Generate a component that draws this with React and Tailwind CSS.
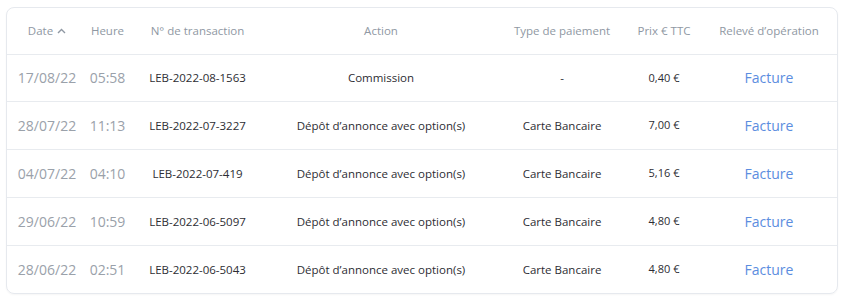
import React from "react";

const rows = [
  ["17/08/22", "05:58", "LEB-2022-08-1563", "Commission", "-", "0,40 €"],
  ["28/07/22", "11:13", "LEB-2022-07-3227", "Dépôt d’annonce avec option(s)", "Carte Bancaire", "7,00 €"],
  ["04/07/22", "04:10", "LEB-2022-07-419", "Dépôt d’annonce avec option(s)", "Carte Bancaire", "5,16 €"],
  ["29/06/22", "10:59", "LEB-2022-06-5097", "Dépôt d’annonce avec option(s)", "Carte Bancaire", "4,80 €"],
  ["28/06/22", "02:51", "LEB-2022-06-5043", "Dépôt d’annonce avec option(s)", "Carte Bancaire", "4,80 €"],
];

export default function App() {
  return (
    <div className="w-[846px] h-[301px] bg-white pt-[7px] pl-[6px]" style={{ fontFamily: '"Open Sans", sans-serif' }}>
      <div className="w-[832px] rounded-lg border border-[#e6e9ee] overflow-hidden shadow-[0_1px_2px_rgba(0,0,0,0.04)]">
        <table className="w-full border-collapse table-fixed">
          <colgroup>
            <col className="w-[80px]" />
            <col className="w-[41px]" />
            <col className="w-[139px]" />
            <col className="w-[228px]" />
            <col className="w-[134px]" />
            <col className="w-[70px]" />
            <col className="w-[140px]" />
          </colgroup>
          <thead>
            <tr className="h-[46px] text-[11.5px] text-[#8f98a3]">
              <th className="font-normal text-center">
                <span className="inline-flex items-center gap-[4px]">
                  Date
                  <svg width="9" height="6" viewBox="0 0 9 6" fill="none" stroke="#8f98a3" strokeWidth="1.4">
                    <path d="M1 5L4.5 1.5L8 5" />
                  </svg>
                </span>
              </th>
              <th className="font-normal text-center">Heure</th>
              <th className="font-normal text-center">N° de transaction</th>
              <th className="font-normal text-center">Action</th>
              <th className="font-normal text-center">Type de paiement</th>
              <th className="font-normal text-center">Prix € TTC</th>
              <th className="font-normal text-center">Relevé d’opération</th>
            </tr>
          </thead>
          <tbody>
            {rows.map((r, i) => (
              <tr key={i} className="h-[47.75px] border-t border-[#e8ebef]">
                <td className="text-center text-[14px] text-[#9aa1aa]">{r[0]}</td>
                <td className="text-center text-[14px] text-[#9aa1aa]">{r[1]}</td>
                <td className="text-center text-[11.5px] text-[#2d2d33]">{r[2]}</td>
                <td className="text-center text-[11.5px] text-[#2d2d33]">{r[3]}</td>
                <td className="text-center text-[11.5px] text-[#2d2d33]">{r[4]}</td>
                <td className="text-center text-[11px] text-[#2d2d33]">{r[5]}</td>
                <td className="text-center text-[14px] text-[#5b8de0]">Facture</td>
              </tr>
            ))}
          </tbody>
        </table>
      </div>
    </div>
  );
}
